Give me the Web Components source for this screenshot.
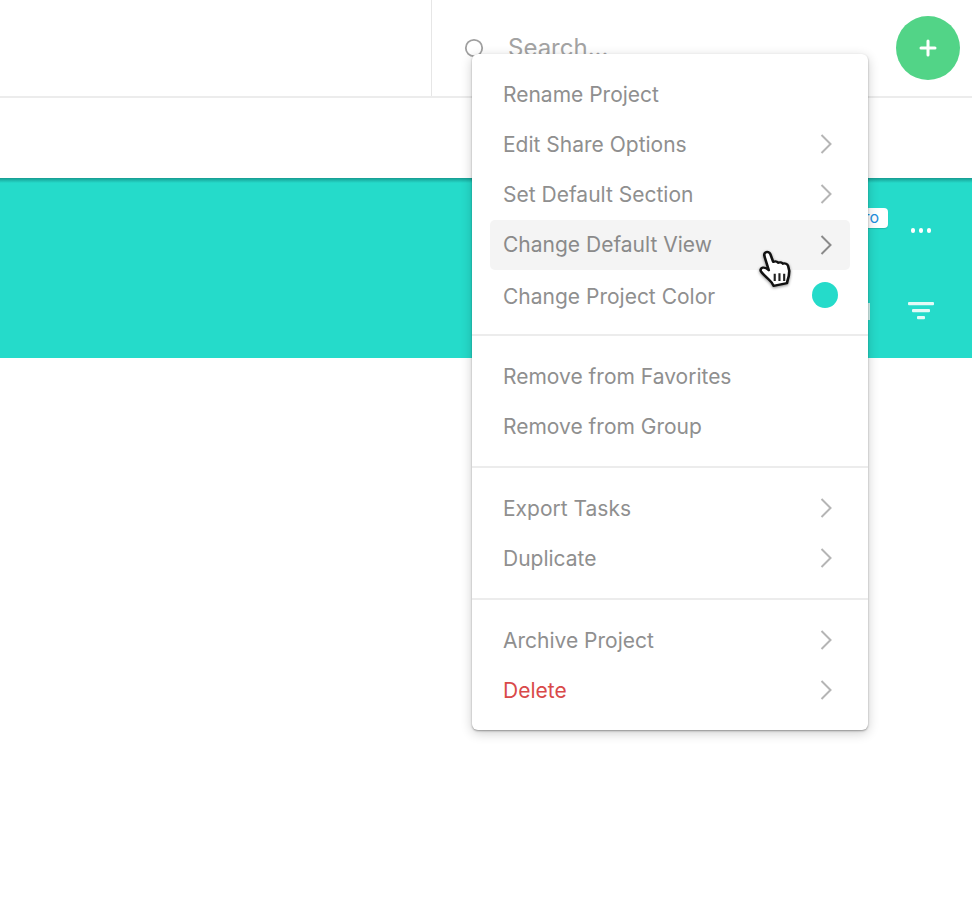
<!DOCTYPE html>
<html>
<head>
<meta charset="utf-8">
<style>
html, body { margin: 0; padding: 0; background: #fff; }
body { font-family: Inter, "Noto Sans", sans-serif; width: 972px; height: 900px; overflow: hidden; position: relative; }
</style>
</head>
<body>
<app-shell>
  <top-bar></top-bar>
  <sub-bar></sub-bar>
  <project-band></project-band>
</app-shell>
<project-menu>
  <menu-group>
    <menu-row>Rename Project</menu-row>
    <menu-row arrow>Edit Share Options</menu-row>
    <menu-row arrow>Set Default Section</menu-row>
    <menu-row arrow active>Change Default View</menu-row>
    <menu-row dot>Change Project Color</menu-row>
  </menu-group>
  <menu-group>
    <menu-row>Remove from Favorites</menu-row>
    <menu-row>Remove from Group</menu-row>
  </menu-group>
  <menu-group>
    <menu-row arrow>Export Tasks</menu-row>
    <menu-row arrow>Duplicate</menu-row>
  </menu-group>
  <menu-group>
    <menu-row arrow>Archive Project</menu-row>
    <menu-row arrow danger>Delete</menu-row>
  </menu-group>
</project-menu>
<hand-cursor></hand-cursor>
<script>
class BaseElement extends HTMLElement {
    constructor() {
        super();
        this.attachShadow({ mode: 'open' });
        this.shadowRoot.innerHTML = this.markup();
    }
    markup() { return '<slot></slot>'; }
}

class AppShell extends BaseElement {
    markup() {
        return `<style>:host { display: flex; flex-direction: column; }</style><slot></slot>`;
    }
}

class TopBar extends BaseElement {
    markup() {
        return `
        <style>
            :host { display: flex; height: 98px; box-sizing: border-box; border-bottom: 2px solid #ececec; }
            .left { width: 431px; border-right: 1px solid #e6e6e6; }
            .search { flex: 1; display: flex; align-items: center; padding: 0 0 0 32px; gap: 24px; height: 96px; }
            .search svg { display: block; }
            .search span { font-size: 24px; color: #a3a3a3; letter-spacing: 0; margin-top: -2px; }
            .add {
                width: 64px; height: 64px; border-radius: 50%; background: #52d487; margin: 16px 12px 0 0;
                display: flex; align-items: center; justify-content: center;
            }
        </style>
        <div class="left"></div>
        <div class="search">
            <svg width="20" height="20" viewBox="0 0 20 20" fill="none" stroke="#a0a0a0" stroke-width="1.8"><circle cx="10" cy="10" r="8.2"/><path d="M16 16l3 3"/></svg>
            <span>Search...</span>
        </div>
        <div class="add">
            <svg width="18" height="18" viewBox="0 0 18 18" stroke="#fff" stroke-width="3" stroke-linecap="round"><path d="M9 2v14M2 9h14"/></svg>
        </div>`;
    }
}

class SubBar extends BaseElement {
    markup() {
        return `<style>:host { display: block; height: 80px; }</style>`;
    }
}

class ProjectBand extends BaseElement {
    markup() {
        return `
        <style>
            :host {
                display: block; height: 180px; position: relative;
                background: linear-gradient(rgba(0,60,60,.4), rgba(0,60,60,0) 5px), #25dbca;
            }
            .badge {
                position: absolute; right: 84px; top: 30px; height: 20px; padding: 0 9px 0 8px; background: #fff; border-radius: 4px;
                font-size: 16px; color: #1f8fe0; line-height: 19px; box-shadow: 0 1px 1px rgba(0,60,60,.2);
            }
            .stub { position: absolute; right: 102px; top: 125px; width: 2px; height: 17px; background: #d5f3f0; }
            .dots { position: absolute; right: 41px; top: 50px; display: flex; gap: 3.5px; }
            .dots i { width: 4.5px; height: 4.5px; border-radius: 50%; background: #fff; display: block; }
            .filter { position: absolute; right: 38px; top: 124px; display: block; }
        </style>
        <div class="badge">Pro</div>
        <div class="stub"></div>
        <div class="dots"><i></i><i></i><i></i></div>
        <svg class="filter" width="26" height="18" viewBox="0 0 26 18" fill="#e4faf7"><rect x="0" y="0" width="26" height="3.2" rx="1"/><rect x="4" y="7" width="18" height="3.2" rx="1"/><rect x="9" y="14" width="8" height="3.2" rx="1"/></svg>`;
    }
}

class ProjectMenu extends BaseElement {
    markup() {
        return `
        <style>
            :host {
                position: absolute; left: 472px; top: 54px; width: 396px; box-sizing: border-box;
                display: block; background: #fff; border-radius: 6px;
                box-shadow: 0 1px 2px rgba(0,0,0,.35), 0 3px 12px rgba(0,0,0,.2);
            }
        </style>
        <slot></slot>`;
    }
}

class MenuGroup extends BaseElement {
    markup() {
        return `
        <style>
            :host { display: block; padding: 15px 18px 15px; border-bottom: 2px solid #ececec; }
            :host(:first-child) { padding-bottom: 13px; }
            :host(:last-child) { border-bottom: 0; }
        </style>
        <slot></slot>`;
    }
}

class MenuRow extends BaseElement {
    markup() {
        return `
        <style>
            :host {
                display: flex; align-items: center; justify-content: space-between; height: 50px;
                box-sizing: border-box; padding: 0 18px 0 13px; border-radius: 5px;
                font-size: 21px; color: #8f8f8f; letter-spacing: 0;
            }
            :host([active]) { background: #f4f4f4; color: #8a8a8a; margin-top: 1px; }
            :host([active]) span { margin-top: -2px; }
            :host([danger]) { color: #d94a4a; }
            :host([dot]) { height: 51px; padding-right: 12px; }
            :host([dot]) span { margin-top: 2px; }
            svg { display: none; }
            :host([arrow]) .chev { display: block; }
            :host([active]) .chev { stroke: #8a8a8a; }
            .dot { display: none; width: 26px; height: 26px; border-radius: 50%; background: #25dbca; margin-top: -1px; }
            :host([dot]) .dot { display: block; }
        </style>
        <span><slot></slot></span>
        <svg class="chev" width="12" height="20" viewBox="0 0 12 20" fill="none" stroke="#b5b5b5" stroke-width="2"><path d="M1.5 1l9 9-9 9"/></svg>
        <div class="dot"></div>`;
    }
}

class HandCursor extends BaseElement {
    markup() {
        return `
        <style>
            :host { position: absolute; left: 757px; top: 250px; display: block; width: 39px; height: 39px; }
            svg { display: block; filter: drop-shadow(0 1px 1.5px rgba(0,0,0,.45)); }
        </style>
        <svg width="39" height="39" viewBox="0 0 33 37" preserveAspectRatio="none">
            <path d="M7 2.5c1.6-1.2 3.6-.4 4.3 1.4l2.4 7.4c1.6-.8 3.2-.5 4.2.8 1.4-.8 3.2-.4 4 .9 1.8-.7 3.7.2 4.4 2.1.9 2.5 1.3 6.3.6 9.6-.5 2.3-1.2 4-1.5 6.8L14 34c-.6-2.4-1.9-3.9-4-6-2.3-2.3-5.3-5.4-6.5-7.4-1-1.7-.2-3.4 1.4-3.8 1.6-.4 3.2.4 5.1 2.4L6.5 6.6C6 5 6 3.4 7 2.5z" fill="#fff" stroke="#111" stroke-width="2.2" stroke-linejoin="round"/>
            <path d="M15 22.5v7M19 22v7.5M23 22.5v7" stroke="#222" stroke-width="1.8" fill="none"/>
        </svg>`;
    }
}

customElements.define('app-shell', AppShell);
customElements.define('top-bar', TopBar);
customElements.define('sub-bar', SubBar);
customElements.define('project-band', ProjectBand);
customElements.define('project-menu', ProjectMenu);
customElements.define('menu-group', MenuGroup);
customElements.define('menu-row', MenuRow);
customElements.define('hand-cursor', HandCursor);
</script>
</body>
</html>
